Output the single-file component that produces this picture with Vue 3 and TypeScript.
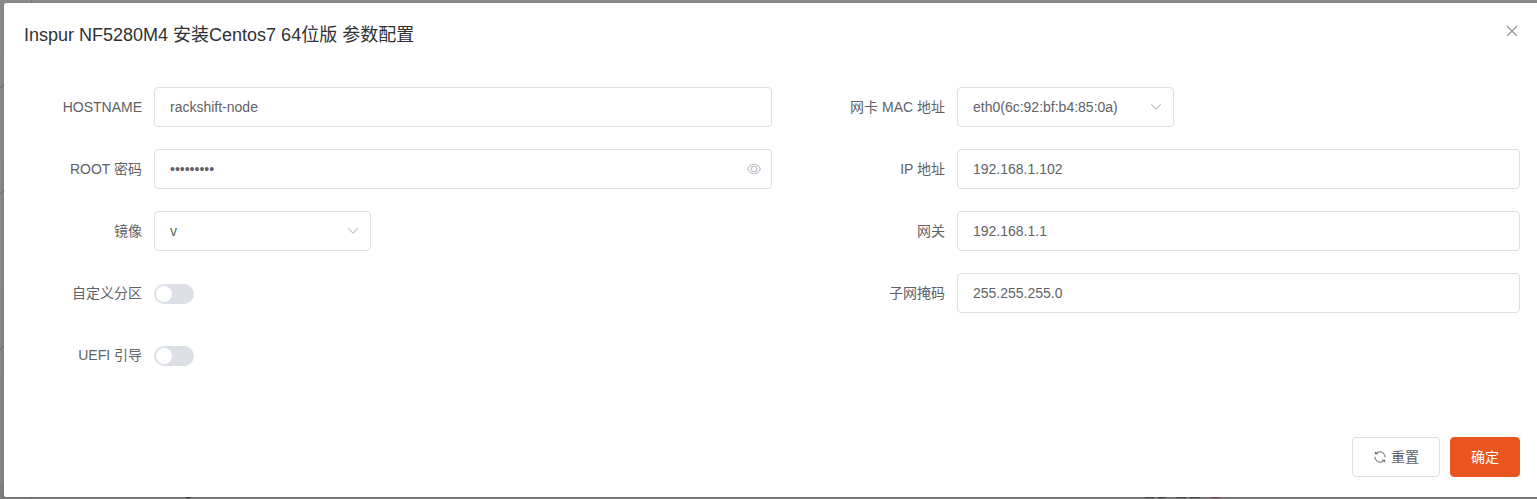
<script setup lang="ts">
import { ref } from 'vue'

type Kind = 'text' | 'password' | 'select' | 'switch'
interface Field {
  label: string
  kind: Kind
  value: string
}

const left = ref<Field[]>([
  { label: 'HOSTNAME', kind: 'text', value: 'rackshift-node' },
  { label: 'ROOT 密码', kind: 'password', value: '•••••••••' },
  { label: '镜像', kind: 'select', value: 'v' },
  { label: '自定义分区', kind: 'switch', value: '' },
  { label: 'UEFI 引导', kind: 'switch', value: '' },
])
const right = ref<Field[]>([
  { label: '网卡 MAC 地址', kind: 'select', value: 'eth0(6c:92:bf:b4:85:0a)' },
  { label: 'IP 地址', kind: 'text', value: '192.168.1.102' },
  { label: '网关', kind: 'text', value: '192.168.1.1' },
  { label: '子网掩码', kind: 'text', value: '255.255.255.0' },
])
</script>

<template>
  <div class="page">
    <svg class="backdrop" width="1537" height="499" viewBox="0 0 1537 499">
      <path d="M31.5 0v3M31.5 497v2M0 486.500h4" stroke="#777" fill="none" />
      <path d="M0 88l4-3M0 194l4-3M0 349l4-3" stroke="#666" fill="none" />
      <path d="M186 497.500h5" stroke="#3c3535" fill="none" />
      <path d="M1145 497.500h9M1158 497.500h8M1176 497.500h10M1190 497.500h10" stroke="#484848" fill="none" />
      <path d="M1211 497.500h8" stroke="#8a4a42" fill="none" />
    </svg>
    <section class="dialog">
      <header class="head">
        <h1 class="title">Inspur NF5280M4 安装Centos7 64位版 参数配置</h1>
        <svg class="close" width="12" height="12" viewBox="0 0 12 12">
          <path d="M1 1l10 10M11 1L1 11" />
        </svg>
      </header>
      <div class="form">
        <div v-for="(col, c) in [left, right]" :key="c" class="col">
          <div v-for="f in col" :key="f.label" class="row">
            <label class="label">{{ f.label }}</label>
            <div v-if="f.kind === 'switch'" class="switch"><i class="knob"></i></div>
            <div v-else class="input" :class="f.kind">
              <span class="value">{{ f.value }}</span>
              <svg v-if="f.kind === 'select'" class="arrow" width="12" height="8" viewBox="0 0 12 8">
                <path d="M1 1.200l5 5 5-5" />
              </svg>
              <svg v-if="f.kind === 'password'" class="eye" width="14" height="12" viewBox="0 0 14 12">
                <path d="M.6 6C2 3 4.300 1.300 7 1.300S12 3 13.400 6C12 9 9.700 10.700 7 10.700S2 9 .6 6z" />
                <circle cx="7" cy="6" r="2.700" />
              </svg>
            </div>
          </div>
        </div>
      </div>
      <footer class="foot">
        <button class="btn">
          <svg class="refresh" width="14" height="14" viewBox="0 0 14 14">
            <path d="M2.300 3.800H5M2.300 1.800v2C4 1.800 6.500 1.600 8.300 2.100C10.500 2.700 12 4.600 12 7.200" />
            <path d="M11.700 10.200H9M11.700 12.200v-2C10 12.200 7.500 12.400 5.700 11.900C3.500 11.300 2 9.400 2 6.800" />
          </svg>
          <span>重置</span>
        </button>
        <button class="btn primary">确定</button>
      </footer>
    </section>
  </div>
</template>

<style>
body {
  margin: 0;
  overflow: hidden;
}
</style>

<style scoped>
.page {
  position: relative;
  box-sizing: border-box;
  width: 1537px;
  height: 499px;
  padding: 3px 0 2px 4px;
  background: linear-gradient(#898989, #868584 96%, #7c7c7c);
  font-family: "Liberation Sans", "Noto Sans CJK SC", sans-serif;
  font-size: 14px;
  color: #606266;
  overflow: hidden;
}
.backdrop {
  position: absolute;
  left: 0;
  top: 0;
}
.dialog {
  position: relative;
  box-sizing: border-box;
  height: 494px;
  padding: 20px 17px 20px 20px;
  background: #fff;
  border-radius: 2px 0 0 2px;
  box-shadow: 0 1px 3px rgba(0, 0, 0, 0.12);
  display: flex;
  flex-direction: column;
}
.head {
  display: flex;
  justify-content: space-between;
  height: 24px;
}
.title {
  margin: 0;
  font-size: 18px;
  line-height: 24px;
  font-weight: 400;
  color: #303133;
  white-space: nowrap;
}
.close {
  margin: 2px 2px 0 0;
  fill: none;
  stroke: #909399;
  stroke-width: 1.1;
}
.form {
  display: grid;
  grid-template-columns: 748px 693px;
  justify-content: space-between;
  margin-top: 40px;
}
.col {
  display: flex;
  flex-direction: column;
  gap: 22px;
}
.row {
  display: flex;
  align-items: center;
  height: 40px;
}
.label {
  width: 118px;
  margin-right: 12px;
  text-align: right;
  line-height: 40px;
  white-space: nowrap;
}
.input {
  flex: 1;
  box-sizing: border-box;
  display: flex;
  align-items: center;
  justify-content: space-between;
  height: 40px;
  padding: 0 15px;
  border: 1px solid #dcdfe6;
  border-radius: 4px;
}
.input.select {
  flex: none;
  width: 217px;
  padding-right: 11px;
}
.input.password {
  padding-right: 10px;
}
.arrow,
.eye {
  fill: none;
  stroke: #c0c4cc;
  stroke-width: 1.1;
}
.switch {
  box-sizing: border-box;
  width: 40px;
  height: 20px;
  margin-top: 2px;
  padding: 2px;
  border-radius: 10px;
  background: #dcdfe6;
}
.knob {
  display: block;
  width: 16px;
  height: 16px;
  border-radius: 50%;
  background: #fff;
}
.foot {
  display: flex;
  justify-content: flex-end;
  gap: 10px;
  margin-top: auto;
}
.btn {
  box-sizing: border-box;
  display: flex;
  align-items: center;
  justify-content: center;
  gap: 4px;
  width: 88px;
  height: 40px;
  padding: 0 0 2px;
  border: 1px solid #dcdfe6;
  border-radius: 4px;
  background: #fff;
  color: #606266;
  font: inherit;
}
.btn.primary {
  width: 70px;
  border-color: #e9551f;
  background: #e9551f;
  color: #fff;
}
.refresh {
  margin-top: 1px;
  fill: none;
  stroke: #606266;
  stroke-width: 1;
}
</style>
